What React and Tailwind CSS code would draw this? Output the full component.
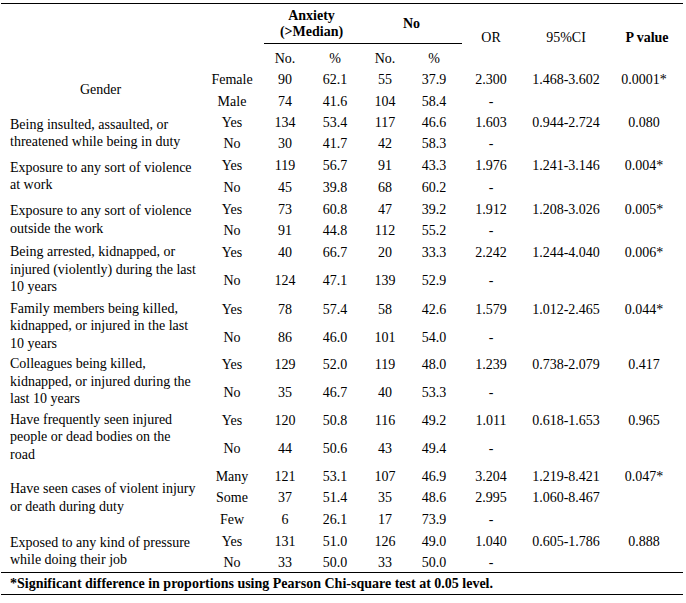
import React from "react";

const H = {
  20: "h-[20px]",
  21: "h-[21px]",
  22: "h-[22px]",
  34: "h-[34px]",
  35: "h-[35px]",
};

const COLS = [
  "w-[64px]",
  "w-[42px]",
  "w-[58px]",
  "w-[42px]",
  "w-[56px]",
  "w-[58px]",
  "w-[92px]",
  "w-[64px]",
];

const groups = [
  {
    label: ["Gender"],
    center: true,
    rows: [
      { h: 22, c: ["Female", "90", "62.1", "55", "37.9", "2.300", "1.468-3.602", "0.0001*"] },
      { h: 22, c: ["Male", "74", "41.6", "104", "58.4", "-", "", ""] },
    ],
  },
  {
    label: ["Being insulted, assaulted, or", "threatened while being in duty"],
    rows: [
      { h: 21, c: ["Yes", "134", "53.4", "117", "46.6", "1.603", "0.944-2.724", "0.080"] },
      { h: 21, c: ["No", "30", "41.7", "42", "58.3", "-", "", ""] },
    ],
  },
  {
    label: ["Exposure to any sort of violence", "at work"],
    rows: [
      { h: 22, c: ["Yes", "119", "56.7", "91", "43.3", "1.976", "1.241-3.146", "0.004*"] },
      { h: 22, c: ["No", "45", "39.8", "68", "60.2", "-", "", ""] },
    ],
  },
  {
    label: ["Exposure to any sort of violence", "outside the work"],
    rows: [
      { h: 22, c: ["Yes", "73", "60.8", "47", "39.2", "1.912", "1.208-3.026", "0.005*"] },
      { h: 21, c: ["No", "91", "44.8", "112", "55.2", "-", "", ""] },
    ],
  },
  {
    label: ["Being arrested, kidnapped, or", "injured (violently) during the last", "10 years"],
    rows: [
      { h: 22, c: ["Yes", "40", "66.7", "20", "33.3", "2.242", "1.244-4.040", "0.006*"] },
      { h: 35, c: ["No", "124", "47.1", "139", "52.9", "-", "", ""] },
    ],
  },
  {
    label: ["Family members being killed,", "kidnapped, or injured in the last", "10 years"],
    rows: [
      { h: 22, c: ["Yes", "78", "57.4", "58", "42.6", "1.579", "1.012-2.465", "0.044*"] },
      { h: 34, c: ["No", "86", "46.0", "101", "54.0", "-", "", ""] },
    ],
  },
  {
    label: ["Colleagues being killed,", "kidnapped, or injured during the", "last 10 years"],
    rows: [
      { h: 21, c: ["Yes", "129", "52.0", "119", "48.0", "1.239", "0.738-2.079", "0.417"] },
      { h: 34, c: ["No", "35", "46.7", "40", "53.3", "-", "", ""] },
    ],
  },
  {
    label: ["Have frequently seen injured", "people or dead bodies on the", "road"],
    rows: [
      { h: 22, c: ["Yes", "120", "50.8", "116", "49.2", "1.011", "0.618-1.653", "0.965"] },
      { h: 34, c: ["No", "44", "50.6", "43", "49.4", "-", "", ""] },
    ],
  },
  {
    label: ["Have seen cases of violent injury", "or death during duty"],
    rows: [
      { h: 22, c: ["Many", "121", "53.1", "107", "46.9", "3.204", "1.219-8.421", "0.047*"] },
      { h: 21, c: ["Some", "37", "51.4", "35", "48.6", "2.995", "1.060-8.467", ""] },
      { h: 22, c: ["Few", "6", "26.1", "17", "73.9", "-", "", ""] },
    ],
  },
  {
    label: ["Exposed to any kind of pressure", "while doing their job"],
    rows: [
      { h: 22, c: ["Yes", "131", "51.0", "126", "49.0", "1.040", "0.605-1.786", "0.888"] },
      { h: 20, c: ["No", "33", "50.0", "33", "50.0", "-", "", ""] },
    ],
  },
];

function Group({ g }) {
  return (
    <div className="flex">
      <div
        className={
          "w-[199px] shrink-0 flex flex-col justify-center leading-[17.5px] " +
          (g.center ? "items-center" : "items-start pl-[9px]")
        }
      >
        {g.label.map((l, i) => (
          <div key={i} className="whitespace-nowrap">
            {l}
          </div>
        ))}
      </div>
      <div className="flex flex-col">
        {g.rows.map((r, i) => (
          <div key={i} className={"flex " + H[r.h]}>
            {r.c.map((v, j) => (
              <div
                key={j}
                className={COLS[j] + " shrink-0 flex items-center justify-center whitespace-nowrap"}
              >
                {v}
              </div>
            ))}
          </div>
        ))}
      </div>
    </div>
  );
}

export default function App() {
  return (
    <div className="bg-white w-[686px] h-[603px] pt-[3px]">
      <div
        className="w-[682px] ml-[1px] border-t border-black text-black text-[14px] leading-[17px]"
        style={{ fontFamily: '"Liberation Serif", "Times New Roman", serif' }}
      >
        {/* Header */}
        <div className="flex h-[64px]">
          <div className="w-[199px] shrink-0" />
          <div className="w-[64px] shrink-0" />
          <div className="w-[198px] shrink-0 flex flex-col">
            <div className="h-[40px] flex border-b border-black font-bold">
              <div className="w-[99px] pr-[4px] flex flex-col items-center justify-center leading-[16px]">
                <div>Anxiety</div>
                <div>(&gt;Median)</div>
              </div>
              <div className="w-[99px] pr-[2px] flex items-center justify-center">No</div>
            </div>
            <div className="h-[24px] flex pt-[4px]">
              <div className="w-[42px] flex items-center justify-center">No.</div>
              <div className="w-[58px] flex items-center justify-center">%</div>
              <div className="w-[42px] flex items-center justify-center">No.</div>
              <div className="w-[56px] flex items-center justify-center">%</div>
            </div>
          </div>
          <div className="w-[58px] shrink-0 flex items-center justify-center pt-[2px]">OR</div>
          <div className="w-[92px] shrink-0 flex items-center justify-center pt-[2px]">95%CI</div>
          <div className="w-[64px] shrink-0 flex items-center justify-center pt-[2px] pl-[6px] font-bold">
            P value
          </div>
        </div>

        {groups.map((g, i) => (
          <Group key={i} g={g} />
        ))}

        <div className="h-[23px] border-y border-black flex items-center pl-[9px] font-bold whitespace-nowrap">
          *Significant difference in proportions using Pearson Chi-square test at 0.05 level.
        </div>
      </div>
    </div>
  );
}
